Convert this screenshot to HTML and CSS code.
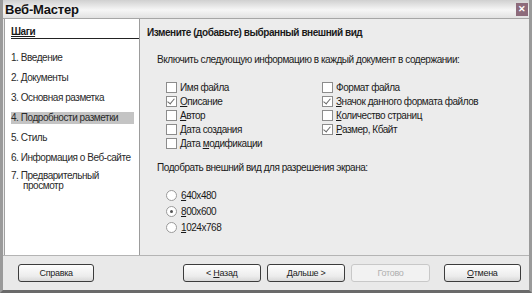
FILE: index.html
```html
<!DOCTYPE html>
<html>

<head>
    <title>Веб-Мастер</title>
    <link rel="stylesheet" href="styles.css">
</head>

<body>
    <div class="window">
        <div class="titlebar">
            <span class="title">Веб-Мастер</span>
            <span class="close">&#10005;</span>
        </div>

        <div class="main">
            <div class="steps">
                <div class="steps-title"><u>Шаги</u></div>
                <div class="step">1. Введение</div>
                <div class="step">2. Документы</div>
                <div class="step">3. Основная разметка</div>
                <div class="step active">4. Подробности разметки</div>
                <div class="step">5. Стиль</div>
                <div class="step">6. Информация о Веб-сайте</div>
                <div class="step wrap">7. Предварительный просмотр</div>
            </div>

            <div class="content">
                <div class="content-title">Измените (добавьте) выбранный внешний вид</div>
                <div class="label">Включить следующую информацию в каждый документ в содержании:</div>

                <div class="checks">
                    <div class="check-col">
                        <div class="check"><span class="box"></span><span>Имя файла</span></div>
                        <div class="check"><span class="box on"></span><span><u>О</u>писание</span></div>
                        <div class="check"><span class="box"></span><span><u>А</u>втор</span></div>
                        <div class="check"><span class="box"></span><span><u>Д</u>ата создания</span></div>
                        <div class="check"><span class="box"></span><span>Дата <u>м</u>одификации</span></div>
                    </div>
                    <div class="check-col">
                        <div class="check"><span class="box"></span><span>Формат файла</span></div>
                        <div class="check"><span class="box on"></span><span><u>З</u>начок данного формата файлов</span></div>
                        <div class="check"><span class="box"></span><span><u>К</u>оличество страниц</span></div>
                        <div class="check"><span class="box on"></span><span><u>Р</u>азмер, Кбайт</span></div>
                    </div>
                </div>

                <div class="label second">Подобрать внешний вид для разрешения экрана:</div>
                <div class="radios">
                    <div class="radio"><span class="circle"></span><span><u>6</u>40x480</span></div>
                    <div class="radio"><span class="circle on"></span><span><u>8</u>00x600</span></div>
                    <div class="radio"><span class="circle"></span><span><u>1</u>024x768</span></div>
                </div>
            </div>
        </div>

        <div class="footer">
            <button class="btn help">Справка</button>
            <div class="spacer"></div>
            <button class="btn">&lt; <u>Н</u>азад</button>
            <button class="btn"><u>Д</u>альше &gt;</button>
            <button class="btn disabled">Готово</button>
            <button class="btn cancel"><u>О</u>тмена</button>
        </div>
    </div>
</body>

</html>
```

FILE: styles.css
```css
body {
    margin: 0;
    font-family: "Liberation Sans", Arial, sans-serif;
    font-size: 10px;
    letter-spacing: -0.45px;
    color: #1a1a1a;
}

.window {
    width: 532px;
    height: 293px;
    box-sizing: border-box;
    background: #e9e9e9;
    border-left: 3px solid #9a9a9a;
    border-right: 3px solid #9a9a9a;
    border-bottom: 3px solid #6a6a6a;
    display: flex;
    flex-direction: column;
}

.titlebar {
    height: 18px;
    flex: none;
    display: flex;
    align-items: center;
    justify-content: space-between;
    padding: 0 0 0 2px;
    background: linear-gradient(#d0d0d0, #f6f6f6 55%, #e2e2e2);
    border-bottom: 1px solid #a6a6a6;
}

.title {
    font-weight: bold;
    font-size: 13px;
    letter-spacing: -0.2px;
    color: #111;
}

.close {
    width: 12px;
    height: 13px;
    margin-right: 1px;
    background: #8d6b7b;
    color: #fff;
    font-size: 9px;
    line-height: 13px;
    text-align: center;
    font-weight: bold;
    letter-spacing: 0;
}

.main {
    display: flex;
    height: 236px;
    flex: none;
}

.steps {
    width: 136px;
    flex: none;
    margin-left: 1px;
    background: #fff;
    border-left: 1px solid #a0a0a0;
    border-right: 1px solid #9c9c9c;
    padding-left: 6px;
    box-sizing: border-box;
}

.steps-title {
    font-weight: bold;
    line-height: 12px;
    padding-top: 7px;
    border-bottom: 1px solid #222;
}

.step {
    width: 123px;
    line-height: 12px;
    margin-top: 8px;
    color: #2a2a2a;
    white-space: nowrap;
}

.steps-title + .step {
    margin-top: 13px;
}

.step.active {
    background: #c4c4c4;
}

.step.wrap {
    white-space: normal;
    line-height: 10px;
    padding-left: 12px;
    text-indent: -12px;
    width: 100px;
    margin-top: 7px;
}

.content {
    flex: 1;
    background: #ececec;
    padding-left: 7px;
}

.content-title {
    font-weight: bold;
    line-height: 12px;
    padding-top: 8px;
}

.label {
    margin: 15px 0 0 10px;
    line-height: 12px;
}

.label.second {
    margin-top: 12px;
}

.checks {
    display: flex;
    margin: 15px 0 0 19px;
}

.check-col {
    width: 156px;
}

.check {
    display: flex;
    align-items: center;
    height: 13.8px;
    white-space: nowrap;
}

.box {
    width: 9px;
    height: 9px;
    flex: none;
    border: 1px solid #8c8c8c;
    background: #fff;
    margin-right: 3px;
    position: relative;
}

.box.on::after {
    content: "";
    position: absolute;
    left: 2px;
    top: 0;
    width: 3px;
    height: 6px;
    border: solid #6a6a6a;
    border-width: 0 1px 1px 0;
    transform: rotate(40deg);
}

.radios {
    margin: 13px 0 0 19px;
}

.radio {
    display: flex;
    align-items: center;
    height: 16.3px;
}

.circle {
    width: 9px;
    height: 9px;
    flex: none;
    border: 1px solid #9a9a9a;
    border-radius: 50%;
    background: #fff;
    margin-right: 4px;
    position: relative;
}

.circle.on::after {
    content: "";
    position: absolute;
    left: 3px;
    top: 3px;
    width: 3px;
    height: 3px;
    border-radius: 50%;
    background: #555;
}

.footer {
    flex: 1;
    display: flex;
    align-items: flex-start;
    gap: 6px;
    padding: 8px 8px 0 15px;
    border-top: 1px solid #b4b4b4;
}

.spacer {
    width: 77px;
}

.btn {
    width: 79px;
    height: 18px;
    padding: 0;
    font-family: "Liberation Sans", Arial, sans-serif;
    font-size: 9px;
    letter-spacing: -0.3px;
    color: #222;
    background: linear-gradient(#fefefe, #ececec 70%, #d8d8d8);
    border: 1px solid #3c3c3c;
    border-radius: 3px;
}

.btn.help {
    width: 77px;
}

.btn.disabled {
    color: #b0b0b0;
    border-color: #c8c8c8;
    background: #f2f2f2;
}

.btn.cancel {
    margin-left: 8px;
    width: 78px;
}
```
